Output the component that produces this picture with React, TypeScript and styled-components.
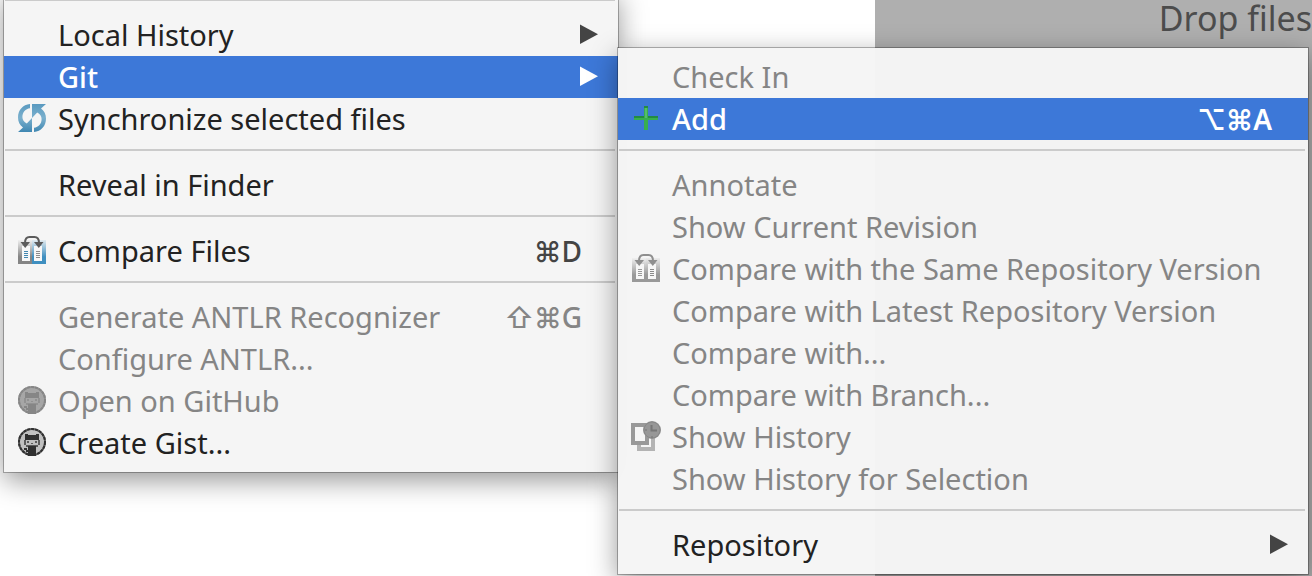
import React from "react";
import styled, { createGlobalStyle } from "styled-components";

const GlobalStyle = createGlobalStyle`
  *, *::before, *::after { box-sizing: border-box; }
  html, body, #root { height: 100%; }
  body {
    margin: 0;
    overflow: hidden;
    background: #ffffff;
    font-family: "Lucida Grande", "Noto Sans", "DejaVu Sans", sans-serif;
  }
`;

const Desktop = styled.main`
  position: relative;
  display: grid;
  grid-template-columns: 2fr 1fr;
  height: 100%;
  overflow: hidden;
`;

const ProjectPane = styled.section`
  background: #ffffff;
`;

const EditorPane = styled.section`
  display: flex;
  justify-content: flex-end;
  align-items: flex-start;
  overflow: hidden;
  background: #afafaf;
`;

const DropHint = styled.p`
  margin: 0;
  color: #4c4c4c;
  font-size: 34px;
  line-height: 36px;
  white-space: nowrap;
`;

const Menu = styled.div`
  position: absolute;
  padding-bottom: 8px;
  background: rgba(245, 245, 245, 0.97);
  box-shadow: 0 0 0 1px rgba(0, 0, 0, 0.28), 0 8px 26px rgba(0, 0, 0, 0.42);
`;

const ContextMenu = styled(Menu)`
  top: -10px;
  left: 4px;
  width: 614px;
`;

const GitMenu = styled(Menu)`
  top: 48px;
  left: 618px;
  right: 4px;
  padding-top: 8px;
`;

const Separator = styled.hr`
  height: 2px;
  margin: 9px 3px 13px 1px;
  border: 0;
  background: #cbcbcb;
`;

const MenuItem = styled.button<{ $selected?: boolean }>`
  display: grid;
  grid-template-columns: 32px 1fr auto;
  column-gap: 8px;
  align-items: center;
  width: 100%;
  height: 42px;
  padding: 0 20px 0 14px;
  border: 0;
  background: ${(p) => (p.$selected ? "#3d78d8" : "transparent")};
  color: ${(p) => (p.$selected ? "#ffffff" : "#222222")};
  font-family: inherit;
  font-size: 29px;
  font-weight: ${(p) => (p.$selected ? 500 : 400)};
  line-height: 42px;
  text-align: left;
  white-space: nowrap;

  &:disabled { color: #858585; }
`;

const IconSlot = styled.span`
  display: flex;
  height: 42px;
  padding-top: 6px;
`;

const Icon = styled.svg.attrs({ width: 28, height: 28, viewBox: "0 0 28 28", "aria-hidden": true })`
  flex: none;
  overflow: visible;
`;

const Shortcut = styled.span<{ $dim?: boolean; $selected?: boolean }>`
  padding-right: 16px;
  color: ${(p) => (p.$selected ? "#ffffff" : p.$dim ? "#858585" : "#444444")};
  font-size: 28px;
  font-weight: ${(p) => (p.$selected ? 600 : 500)};
`;

const Modifiers = styled.span`
  font-family: Inter, "DejaVu Sans", sans-serif;
  line-height: 28px;
`;

const Arrow = styled.svg`
  display: block;
  fill: currentColor;
`;

const ArrowSlot = styled.span<{ $selected?: boolean }>`
  color: ${(p) => (p.$selected ? "#ffffff" : "#444444")};
`;

const SubmenuArrow = () => (
  <Arrow width="18" height="24" viewBox="0 0 18 24" aria-hidden="true">
    <path d="M0 1.5 L18 11.3 L0 21 Z" />
  </Arrow>
);

const SyncIcon = () => (
  <Icon>
    <defs>
      <linearGradient id="sync-a" x1="0" y1="0" x2="0" y2="1">
        <stop offset="0" stopColor="#5a9ac0" />
        <stop offset="0.5" stopColor="#7bb0cd" />
        <stop offset="1" stopColor="#3f87b2" />
      </linearGradient>
    </defs>
    <g fill="url(#sync-a)">
      <path d="M12 0 C5 .6 0 6 0 13.5 C0 17.8 1.8 21.2 5 23.5 L0 28 H14 V14 L8.8 19.6 C6 18 4.4 16 4.4 13 C4.4 8 7.5 4.8 12 4.2 Z" />
      <path d="M16 28 C23 27.4 28 22 28 14.5 C28 10.2 26.2 6.8 23 4.5 L28 0 H14 V14 L19.2 8.4 C22 10 23.6 12 23.6 15 C23.6 20 20.5 23.2 16 23.8 Z" />
    </g>
  </Icon>
);

const CompareIcon = ({ dim }: { dim?: boolean }) => {
  const id = dim ? "cmp-dim" : "cmp";
  const left = dim ? "#999999" : "#858585";
  const right = dim ? "#999999" : "#3f8fc0";
  const arrow = dim ? "#8f8f8f" : "#5b5b5b";
  return (
    <Icon>
      <defs>
        <linearGradient id={`${id}-l`} x1="0" y1="0" x2="0" y2="1">
          <stop offset="0" stopColor={left} stopOpacity="0.05" />
          <stop offset="0.7" stopColor={left} />
        </linearGradient>
        <linearGradient id={`${id}-r`} x1="0" y1="0" x2="0" y2="1">
          <stop offset="0" stopColor={right} stopOpacity="0.1" />
          <stop offset="0.7" stopColor={right} />
        </linearGradient>
      </defs>
      <rect x="0" y="4" width="14" height="24" fill={`url(#${id}-l)`} />
      <rect x="14" y="4" width="14" height="24" fill={`url(#${id}-r)`} />
      <path d="M4 10 H12 V25 H4 Z M16 10 H24 V25 H16 Z" fill="#f7f7f7" />
      <path d="M6 15.5h4M6 17.5h4M6 19.5h4M6 21.5h4" stroke={dim ? "#999999" : "#4287b0"} strokeWidth="1" />
      <path d="M18 15.5h4M18 17.5h4M18 19.5h4M18 21.5h4" stroke="#8b8b8b" strokeWidth="1" />
      <path d="M7 7 C7 3 8.5 1 11.5 1 H16.5 C19.5 1 21 3 21 7" fill="none" stroke={arrow} strokeWidth="2" />
      <path d="M2.5 6 H12 L7.2 12 Z M16 6 H25.5 L20.8 12 Z" fill={arrow} />
    </Icon>
  );
};

const GitHubIcon = ({ dim }: { dim?: boolean }) => {
  const dark = dim ? "#868686" : "#303030";
  const ring = dim ? "#939393" : "#626262";
  const disc = dim ? "#a6a6a6" : "#c0c0c0";
  const shade = dim ? "#929292" : "#5c5c5c";
  return (
    <Icon>
      <circle cx="14" cy="14" r="13" fill={disc} stroke={ring} strokeWidth="2" />
      <circle cx="14" cy="14" r="13" fill="none" stroke={dark} strokeWidth="2" strokeDasharray="3 1" />
      <path d="M7 6 H10 V7 H18 V6 H21 V12 H7 Z" fill={dark} />
      <path d="M6 12 H8 V17 H20 V12 H22 V17 H20 V19 H8 V17 H6 Z" fill={shade} />
      <path d="M10 18 H18 V28 H10 V24 H8 V22 H6 V20 H9 V22 H10 Z" fill={dark} />
      <path d="M9 13h2v2h-2zM17 13h2v2h-2zM13 15h2v1h-2z" fill={shade} />
    </Icon>
  );
};

const PlusIcon = () => (
  <Icon>
    <path d="M2 12 H12 V2 H16 V12 H26 V16 H16 V26 H12 V16 H2 Z" fill="#38ae50" />
    <path d="M2 12 H12 V14 H2 Z M16 12 H26 V14 H16 Z M12 2 H16 V4 H12 Z" fill="#238b43" />
    <path d="M13 4 H15 V14 H13 Z" fill="#55bd69" />
  </Icon>
);

const HistoryIcon = () => (
  <Icon>
    <path d="M7 22 V27 H21 V14" fill="none" stroke="#b3b3b3" strokeWidth="4" />
    <path d="M1 3 H15 V21 H1 Z" fill="#f5f5f5" stroke="#999999" strokeWidth="4" />
    <circle cx="20" cy="8" r="9" fill="#979797" />
    <circle cx="20" cy="8" r="8" fill="none" stroke="#888888" />
    <path d="M19.5 3 V8.5 H25" fill="none" stroke="#777777" strokeWidth="2" />
    <path d="M13 8h2M20 14v2" stroke="#777777" strokeWidth="1" />
  </Icon>
);

type ItemProps = {
  label: string;
  icon?: React.ReactNode;
  modifiers?: string;
  shortcutKey?: string;
  submenu?: boolean;
  selected?: boolean;
  disabled?: boolean;
};

const Item = ({ label, icon, modifiers, shortcutKey, submenu, selected, disabled }: ItemProps) => (
  <MenuItem type="button" role="menuitem" $selected={selected} disabled={disabled} aria-haspopup={submenu ? "menu" : undefined}>
    <IconSlot>{icon}</IconSlot>
    <span>{label}</span>
    {shortcutKey && (
      <Shortcut $dim={disabled} $selected={selected}>
        <Modifiers>{modifiers}</Modifiers>
        {shortcutKey}
      </Shortcut>
    )}
    {submenu && <ArrowSlot $selected={selected}><SubmenuArrow /></ArrowSlot>}
  </MenuItem>
);

export default function App() {
  return (
    <>
      <GlobalStyle />
      <Desktop>
        <ProjectPane />
        <EditorPane>
          <DropHint>Drop files</DropHint>
        </EditorPane>
        <ContextMenu role="menu" aria-label="Context menu">
          <Separator />
          <Item label="Local History" submenu />
          <Item label="Git" submenu selected />
          <Item label="Synchronize selected files" icon={<SyncIcon />} />
          <Separator />
          <Item label="Reveal in Finder" />
          <Separator />
          <Item label="Compare Files" modifiers="⌘" shortcutKey="D" icon={<CompareIcon />} />
          <Separator />
          <Item label="Generate ANTLR Recognizer" modifiers="⇧⌘" shortcutKey="G" disabled />
          <Item label="Configure ANTLR..." disabled />
          <Item label="Open on GitHub" icon={<GitHubIcon dim />} disabled />
          <Item label="Create Gist..." icon={<GitHubIcon />} />
        </ContextMenu>
        <GitMenu role="menu" aria-label="Git">
          <Item label="Check In" disabled />
          <Item label="Add" modifiers="⌥⌘" shortcutKey="A" icon={<PlusIcon />} selected />
          <Separator />
          <Item label="Annotate" disabled />
          <Item label="Show Current Revision" disabled />
          <Item label="Compare with the Same Repository Version" icon={<CompareIcon dim />} disabled />
          <Item label="Compare with Latest Repository Version" disabled />
          <Item label="Compare with..." disabled />
          <Item label="Compare with Branch..." disabled />
          <Item label="Show History" icon={<HistoryIcon />} disabled />
          <Item label="Show History for Selection" disabled />
          <Separator />
          <Item label="Repository" submenu />
        </GitMenu>
      </Desktop>
    </>
  );
}
